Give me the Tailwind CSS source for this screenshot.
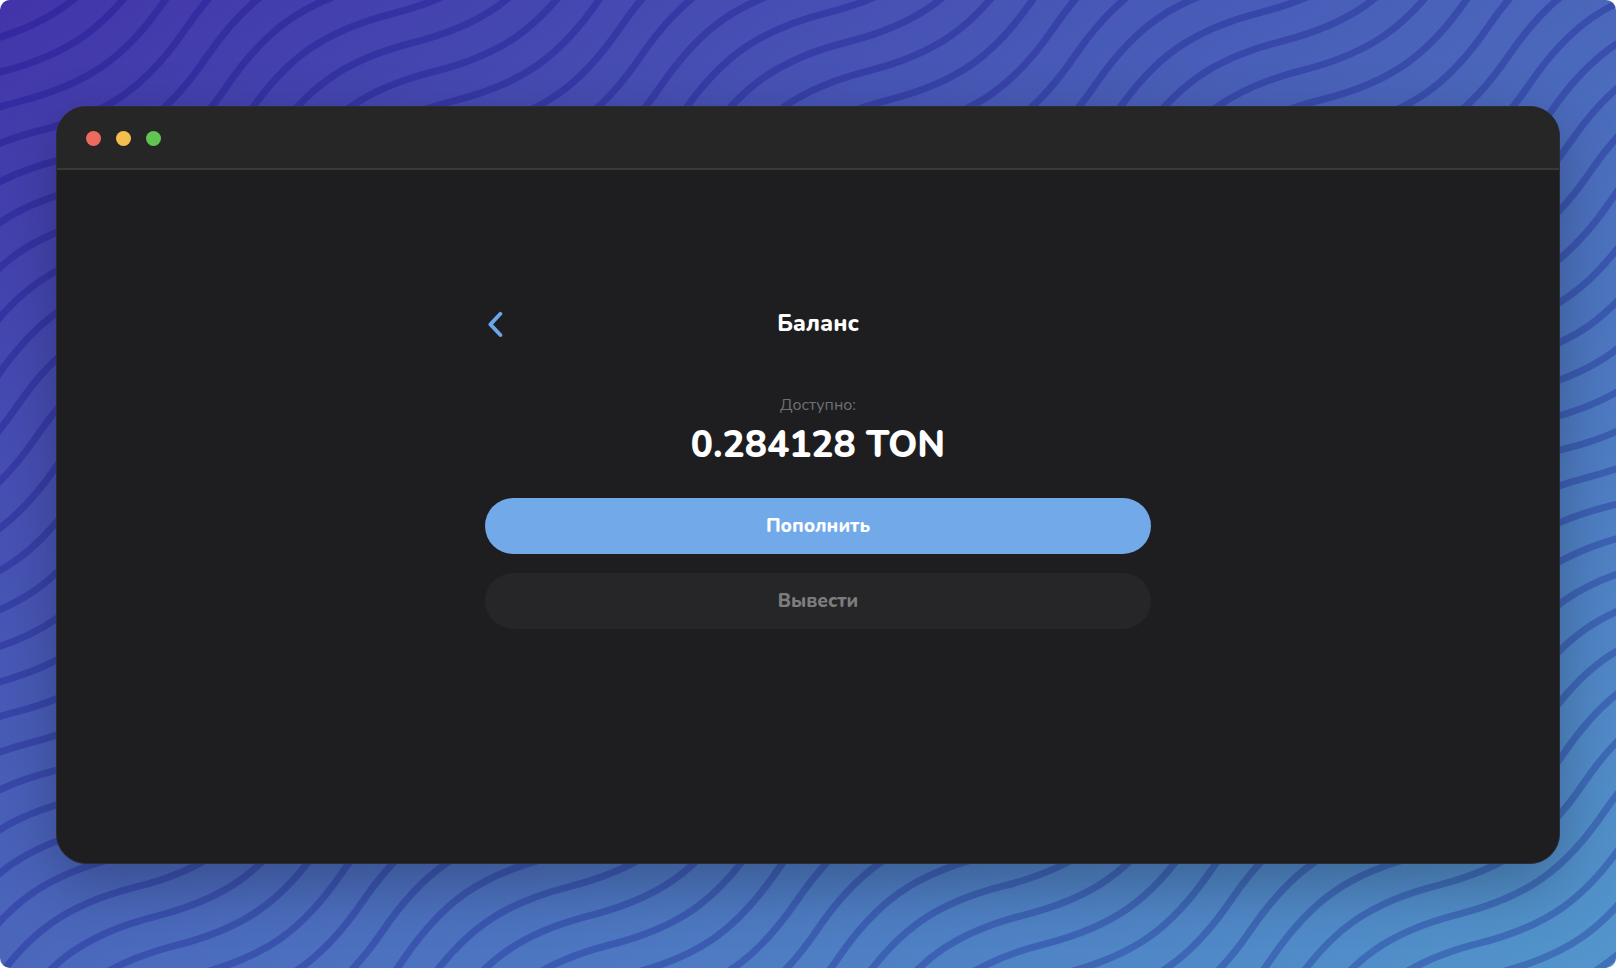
<!DOCTYPE html>
<html lang="ru">

<head>
    <meta charset="UTF-8" />
    <meta name="viewport" content="width=device-width, initial-scale=1.0" />
    <title>Баланс</title>
    <script src="https://cdn.jsdelivr.net/npm/@tailwindcss/browser@4"></script>
    <script>
        document.addEventListener('DOMContentLoaded', function () {
            drawWaves();
        });

        // Fills the background with parallel wavy lines, tilted up to the right
        function drawWaves() {
            const period = 356;
            const spacing = 35.5;
            const half = period / 2;
            let d = '';

            for (let i = -8; i < 90; i++) {
                d += `M${-42 - period * 5} ${23.4 + i * spacing}`;
                for (let j = 0; j < 14; j++) {
                    d += `c66 25 ${half - 66} 25 ${half} 0c66 -25 ${half - 66} -25 ${half} 0`;
                }
            }
            document.getElementById('waves').setAttribute('d', d);
        }
    </script>
</head>

<body class="bg-white font-['Nunito','Open_Sans','Noto_Sans',sans-serif]">
    <div
        class="relative flex min-h-screen overflow-hidden rounded-[10px] bg-linear-to-br from-[#4234aa] to-[#5295cb] px-14 pt-[106px] pb-[104px]">
        <svg class="absolute inset-0 h-full w-full" aria-hidden="true">
            <path id="waves" transform="rotate(-35)" fill="none" stroke="#06007c" stroke-opacity="0.24"
                stroke-width="7" />
        </svg>

        <!-- Window -->
        <div
            class="relative flex flex-1 flex-col overflow-hidden rounded-[30px] border border-[#2b2d35] bg-[#1e1e20] shadow-[0_20px_60px_rgba(0,0,0,0.25)]">
            <header
                class="flex h-[63px] items-center gap-[15px] border-b-2 border-[#3a3a3a] bg-[#262626] px-[29px] pt-px">
                <span class="size-[15px] rounded-full bg-[#ec6a5e]"></span>
                <span class="size-[15px] rounded-full bg-[#f4bf4f]"></span>
                <span class="size-[15px] rounded-full bg-[#61c554]"></span>
            </header>

            <main class="flex flex-1 justify-center pt-[138px] pl-5">
                <div class="flex w-full max-w-[666px] flex-col">
                    <div class="grid grid-cols-[32px_1fr_32px] items-center">
                        <button type="button" aria-label="Назад" class="flex h-8 items-center text-[#6ba6e8]">
                            <svg class="ml-[3px] h-7 w-4" viewBox="0 0 16 28" fill="none" stroke="currentColor"
                                stroke-width="3.8" stroke-linecap="round" stroke-linejoin="round">
                                <path d="M12.4 3.8L2.4 14.4L12.4 25" />
                            </svg>
                        </button>
                        <h1 class="text-center text-[23px] leading-8 font-extrabold text-white">Баланс</h1>
                    </div>

                    <p class="mt-[53px] text-center text-base leading-6 text-[#6f6f74]">Доступно:</p>
                    <p class="mt-1 text-center text-[37px] leading-12 font-extrabold text-white">0.284128 TON</p>

                    <div class="mt-[29px] flex flex-col gap-[19px]">
                        <button type="button"
                            class="h-14 rounded-full bg-[#71a9e9] text-[19px] font-extrabold text-white">Пополнить</button>
                        <button type="button"
                            class="h-14 rounded-full bg-[#262628] text-[19px] font-extrabold text-[#7d7d80]">Вывести</button>
                    </div>
                </div>
            </main>
        </div>
    </div>
</body>

</html>
